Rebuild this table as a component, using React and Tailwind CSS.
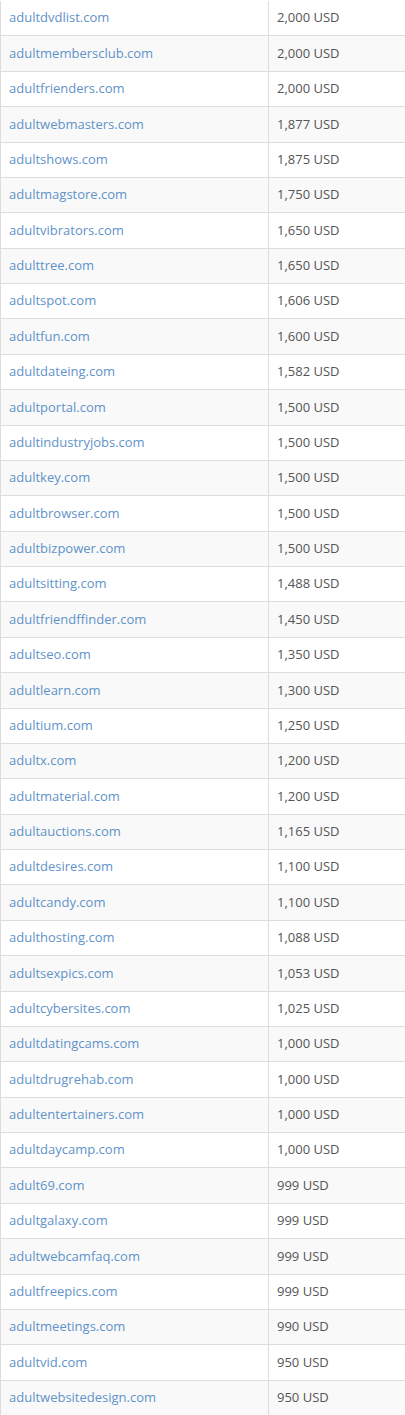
const ROWS = [
  ["adultdvdlist.com", "2,000 USD"],
  ["adultmembersclub.com", "2,000 USD"],
  ["adultfrienders.com", "2,000 USD"],
  ["adultwebmasters.com", "1,877 USD"],
  ["adultshows.com", "1,875 USD"],
  ["adultmagstore.com", "1,750 USD"],
  ["adultvibrators.com", "1,650 USD"],
  ["adulttree.com", "1,650 USD"],
  ["adultspot.com", "1,606 USD"],
  ["adultfun.com", "1,600 USD"],
  ["adultdateing.com", "1,582 USD"],
  ["adultportal.com", "1,500 USD"],
  ["adultindustryjobs.com", "1,500 USD"],
  ["adultkey.com", "1,500 USD"],
  ["adultbrowser.com", "1,500 USD"],
  ["adultbizpower.com", "1,500 USD"],
  ["adultsitting.com", "1,488 USD"],
  ["adultfriendffinder.com", "1,450 USD"],
  ["adultseo.com", "1,350 USD"],
  ["adultlearn.com", "1,300 USD"],
  ["adultium.com", "1,250 USD"],
  ["adultx.com", "1,200 USD"],
  ["adultmaterial.com", "1,200 USD"],
  ["adultauctions.com", "1,165 USD"],
  ["adultdesires.com", "1,100 USD"],
  ["adultcandy.com", "1,100 USD"],
  ["adulthosting.com", "1,088 USD"],
  ["adultsexpics.com", "1,053 USD"],
  ["adultcybersites.com", "1,025 USD"],
  ["adultdatingcams.com", "1,000 USD"],
  ["adultdrugrehab.com", "1,000 USD"],
  ["adultentertainers.com", "1,000 USD"],
  ["adultdaycamp.com", "1,000 USD"],
  ["adult69.com", "999 USD"],
  ["adultgalaxy.com", "999 USD"],
  ["adultwebcamfaq.com", "999 USD"],
  ["adultfreepics.com", "999 USD"],
  ["adultmeetings.com", "990 USD"],
  ["adultvid.com", "950 USD"],
  ["adultwebsitedesign.com", "950 USD"],
];

export default function App() {
  return (
    <div className="w-[405px] h-[1415px] bg-white font-['Open_Sans',sans-serif] text-[13px] overflow-hidden pt-px">
      <div className="border-l border-[#ddd]">
        {ROWS.map(([domain, price], i) => (
          <div
            key={domain}
            className={`flex h-[35.38px] border-b border-[#ddd] ${i % 2 === 1 ? "bg-[#f9f9f9]" : "bg-white"}`}
          >
            <div className="w-[268px] shrink-0 border-r border-[#ddd] flex items-center pl-[8px]">
              <a href="#" className="text-[#5f93c9]">{domain}</a>
            </div>
            <div className="flex-1 flex items-center pl-[8px] text-[#555]">{price}</div>
          </div>
        ))}
      </div>
    </div>
  );
}
